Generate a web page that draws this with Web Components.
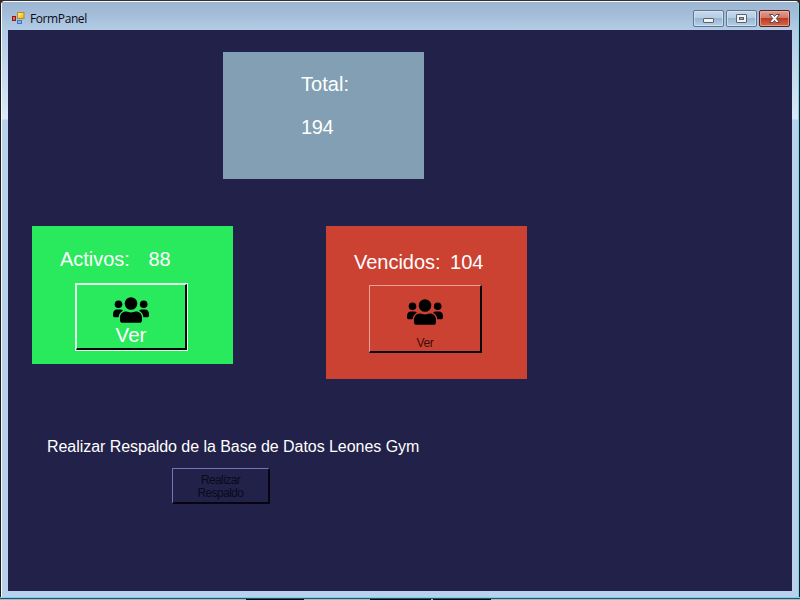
<!DOCTYPE html>
<html lang="es">
<head>
<meta charset="utf-8">
<title>FormPanel</title>
<style>
html,body{margin:0;width:800px;height:600px;overflow:hidden;background:#3a2622;font-family:"Liberation Sans",Arial,sans-serif}
.top{padding:22px 0 0 215px}
.row{display:flex;align-items:flex-start;gap:93px;padding:47px 0 0 24px}
.backup{padding:58px 0 0 39px}
.backup beveled-button{margin:11px 0 0 125px}
stat-card text-label{--size:20px;--lh:24px}
</style>
</head>
<body>
<form-window caption="FormPanel">
  <div class="top">
    <stat-card style="--bg:#829fb3;--h:127px;--pad:20px 0 0 78px">
      <text-label style="--lls:.05px">Total:</text-label>
      <text-label style="--mt:19px;--lls:-.4px">194</text-label>
    </stat-card>
  </div>
  <div class="row">
    <stat-card style="--bg:#29e95c;--h:138px;--pad:21px 0 0 28px">
      <text-label style="--gap:18.5px">Activos:<span slot="value">88</span></text-label>
      <beveled-button people focused style="--w:113px;--bh:68px;--ml:15px;--mt:12px;--fs:20.5px;--fg:#fff;--lh:22px;--tm:1px;--hi:#e4ffe9">Ver</beveled-button>
    </stat-card>
    <stat-card style="--bg:#cc4232;--h:153px;--pad:24px 0 0 28px">
      <text-label style="--gap:9.5px">Vencidos:<span slot="value">104</span></text-label>
      <beveled-button people style="--w:113px;--bh:68px;--ml:15px;--mt:11px;--fs:12px;--ls:-.4px;--fg:#3a0e0a;--lh:14px;--tm:10px;--hi:#eda298">Ver</beveled-button>
    </stat-card>
  </div>
  <div class="backup">
    <text-label style="--size:16px;--lh:20px;--lls:-.045px">Realizar Respaldo de la Base de Datos Leones Gym</text-label>
    <beveled-button style="--w:98px;--bh:36px;--fs:12px;--fg:#0b0a1c;--lh:13px;--ls:-.6px;--hi:#7672b4;--pt:3px">Realizar<br>Respaldo</beveled-button>
  </div>
</form-window>

<script>
function define(name, html, setup) {
  const t = document.createElement('template');
  t.innerHTML = html;
  customElements.define(name, class extends HTMLElement {
    constructor() {
      super();
      this.attachShadow({mode: 'open'}).append(t.content.cloneNode(true));
    }
    connectedCallback() { if (setup) setup(this, this.shadowRoot); }
  });
}

define('app-icon', `<style>:host{display:block;width:13px;height:13px}svg{display:block}</style>
<svg width="13" height="13" viewBox="0 0 13 13">
<defs><linearGradient id="y" x2="1" y2="1"><stop stop-color="#fff3a0"/><stop offset="1" stop-color="#eeb000"/></linearGradient></defs>
<rect x="5.5" y=".5" width="6.5" height="6" fill="url(#y)" stroke="#b88a20"/>
<rect x=".5" y="4.5" width="3" height="4" fill="#e06a55" stroke="#8f1a18"/>
<rect x="5.5" y="8.5" width="4" height="3" fill="#7db4f4" stroke="#4377bd"/></svg>`);

define('caption-button', `<style>
:host{display:block;box-sizing:border-box;width:31px;height:17px;border:1px solid #60758e;border-radius:2px;background:linear-gradient(#c6d9ec 0,#b6cde4 46%,#98b5d2 50%,#b5d0ea 100%);box-shadow:inset 0 0 0 1px #dce9f5aa}
:host([kind=close]){border-color:#5a2020;background:linear-gradient(#e0a092 0,#d27866 46%,#bd3a22 50%,#d4694c 100%);box-shadow:inset 0 0 0 1px #f0bcaa99}
svg{display:block}g{display:none}
:host([kind=min]) .min,:host([kind=max]) .max,:host([kind=close]) .close{display:inline}
</style>
<svg width="29" height="15" viewBox="0 0 29 15">
<g class="min"><rect x="9.5" y="7.5" width="10" height="4" rx=".5" fill="#f3f3f3" stroke="#59626d"/></g>
<g class="max"><rect x="9.5" y="3.5" width="10" height="8" rx=".5" fill="#f3f3f3" stroke="#59626d"/><rect x="12.5" y="6.5" width="4" height="2" fill="#91aac4" stroke="#59626d"/></g>
<g class="close"><path d="M9.5 3.5h3.4l1.6 2 1.6-2h3.4l-3.2 4 3.2 4h-3.4l-1.6-2-1.6 2H9.5l3.2-4z" fill="#fff" stroke="#594a51" stroke-linejoin="round"/></g></svg>`);

define('form-window', `<style>
:host{display:grid;grid-template-rows:28px 561px 6px 3px;box-sizing:border-box;width:800px;height:600px;padding:2px 2px 0;position:relative;border-radius:7px 7px 0 0;
background:linear-gradient(#303439,#303439) 0 0/100% 1px no-repeat,linear-gradient(#f4f9fd,#f4f9fd) 0 1px/100% 1px no-repeat,linear-gradient(#191c20,#191c20) 0 0/1px 100% no-repeat,linear-gradient(#fafdff,#fafdff) 1px 0/1px 100% no-repeat,linear-gradient(#102024,#102024) 799px 0/1px 100% no-repeat,linear-gradient(#78d9ed,#78d9ed) 798px 0/1px 100% no-repeat,linear-gradient(#9bb5d1 0,#a5bfdb 16px,#b3cce5 30px,#d9e9f7 119px,#b8d1ed 120px,#b9d1ed 100%)}
header{display:flex;align-items:flex-start;padding:8px 8px 0 10px}
h1{margin:0 auto 0 5px;font:12px/17px "Open Sans","Noto Sans",sans-serif;letter-spacing:-.4px;color:#080b17}
app-icon{margin-top:2px}
.controls{display:flex;gap:2px}
main{margin:0 6px;background:#222149;overflow:hidden;color:#fff}
.frame{grid-row:4;margin:0 -2px;background:linear-gradient(#72d4eb 0 1px,#2b5260 1px 2px,#aab9c6 2px 3px)}
.frame::after{content:"";display:block;height:3px;background:linear-gradient(90deg,#090b10 0 58px,#aab9c6 58px 124px,#090b10 124px 185px,#aab9c6 185px 187px,#090b10 187px) 246px 2px/245px 1px no-repeat}
</style>
<header><app-icon></app-icon><h1></h1><div class="controls"><caption-button kind="min"></caption-button><caption-button kind="max"></caption-button><caption-button kind="close"></caption-button></div></header>
<main><slot></slot></main><div class="frame"></div>`, (el, root) => {
  root.querySelector('h1').textContent = el.getAttribute('caption');
});

define('stat-card', `<style>:host{display:block;box-sizing:border-box;width:201px;height:var(--h);background:var(--bg);padding:var(--pad)}</style><slot></slot>`);

define('text-label', `<style>
:host{display:flex;gap:var(--gap,0);margin-top:var(--mt,0);color:#fff;font-size:var(--size,20px);line-height:var(--lh,24px);letter-spacing:var(--lls,-.02px);white-space:nowrap}
</style><span><slot></slot></span><slot name="value"></slot>`);

define('people-icon', `<style>:host{display:block;width:36px;height:27px}svg{display:block}</style>
<svg width="36" height="27" viewBox="0 0 36 27" fill="#000">
<circle cx="18" cy="6.5" r="6.3"/><circle cx="5.5" cy="7.3" r="3.8"/><circle cx="30.7" cy="7.3" r="3.8"/>
<path d="M7 23.2v-2.1c0-4.2 2.4-6.5 6.2-6.5 1.7 0 2.5.8 4.8.8s3.1-.8 4.8-.8c3.8 0 6.2 2.3 6.2 6.5v2.1c0 1.7-1 2.6-2.6 2.6H9.6C8 25.8 7 24.9 7 23.2z"/>
<path d="M0 17.4c0-2.8 1.5-4.8 4-4.8h3.3c1 0 1.9.4 2.6 1.1-2.6 1.4-3.9 3.3-4.3 6.6H2c-1.3 0-2-.6-2-1.8zM36 17.4c0-2.8-1.5-4.8-4-4.8h-3.3c-1 0-1.9.4-2.6 1.1 2.6 1.4 3.9 3.3 4.3 6.6H34c1.3 0 2-.6 2-1.8z"/></svg>`);

define('beveled-button', `<style>
:host{display:block;width:var(--w);height:var(--bh);margin:var(--mt,0) 0 0 var(--ml,0)}
button{display:flex;flex-direction:column;align-items:center;justify-content:center;box-sizing:border-box;width:100%;height:100%;padding:var(--pt,0) 0 0;margin:0;background:transparent;border:solid;border-width:1px 2px 2px 1px;border-color:var(--hi) #090510 #090510 var(--hi);font:var(--fs)/var(--lh) "Liberation Sans",Arial,sans-serif;letter-spacing:var(--ls,0);color:var(--fg)}
.outline{box-sizing:border-box;height:100%}
:host([focused]) .outline{border:1px solid var(--hi)}
:host([people]) button{justify-content:flex-start}
people-icon{display:none;flex:none}
:host([people]) people-icon{display:block;margin:13px 0 var(--tm)}
:host([focused]) people-icon{margin-top:12px!important}
:host([focused]) .text{margin-top:-1px}
.text{text-align:center}
</style><div class="outline"><button><people-icon></people-icon><span class="text"><slot></slot></span></button></div>`);
</script>
</body>
</html>
